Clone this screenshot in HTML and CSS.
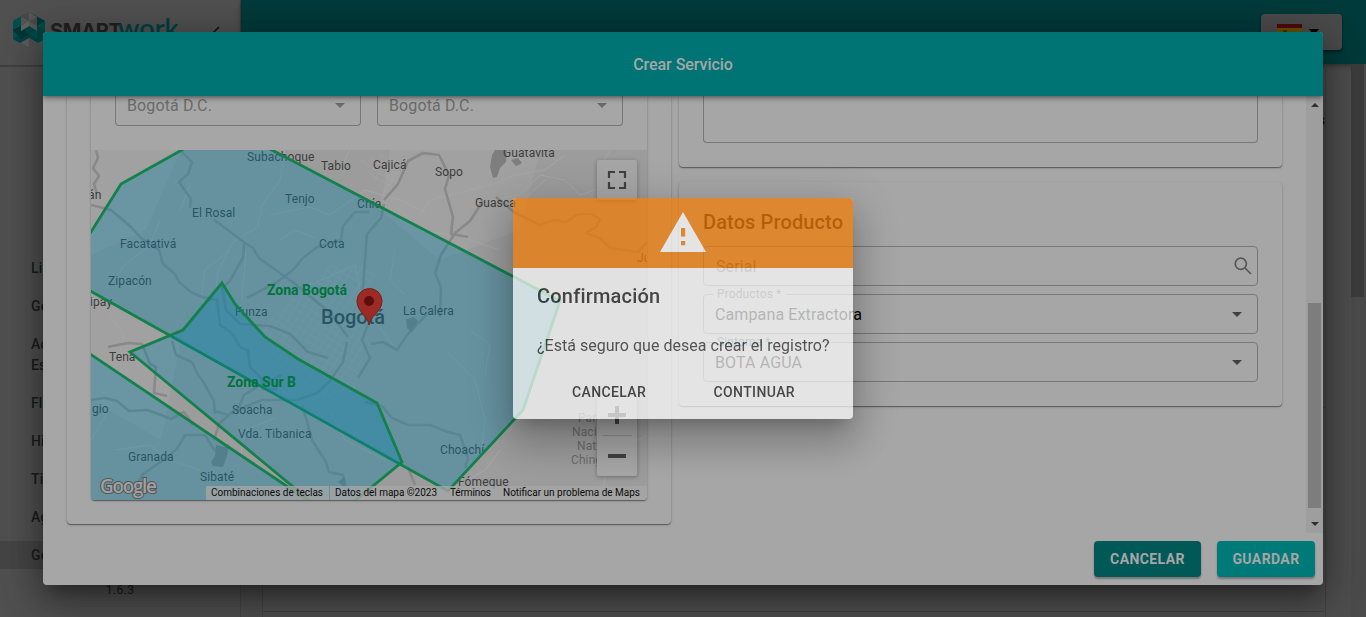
FILE: index.html
```html
<!DOCTYPE html>
<html lang="es">
<head>
<meta charset="utf-8">
<title>Crear Servicio</title>
<link rel="stylesheet" href="styles.css">
</head>
<body>
<div class="app">
  <aside class="sidebar">
    <div class="brand">
      <svg class="brand-mark" viewBox="0 0 34 36">
        <path fill="#004241" d="M1 9 17 0l16 9v18l-16 9-16-9z"/>
        <path fill="#004f4e" d="m1 9 8-4v9l-8 4zM1 18l8 5-8 4z"/>
        <path fill="#003736" d="m9 14 8 9-8 4-8-9zM25 5l8 4-8 5z"/>
        <path fill="#004b4a" d="m33 9-8 5 8 4zM17 22l8-4v9z"/>
        <path fill="#565656" d="M9 5 17 0l8 5v14l-8-5-8 5z"/>
        <path fill="#484848" d="M9 5 17 0v9zM17 9l8-4v9z"/>
        <path fill="#616161" d="m9 14 8-5v5l-8 5z"/>
        <path fill="#5b5b5b" d="m8 31 9-5 9 5-9 5z"/>
        <path fill="#4e4e4e" d="m17 26 9 5-9 5z"/>
      </svg>
      <span class="brand-smart">SMART</span><span class="brand-work">work</span>
      <svg class="brand-arrow" viewBox="0 0 8 14"><path d="M7 1 1 7l6 6" fill="none" stroke="#161616" stroke-width="1.7"/></svg>
    </div>
    <nav class="menu">
      <div class="menu-item">Li</div>
      <div class="menu-item">Ge</div>
      <div class="menu-item tall">Ac<br>Es</div>
      <div class="menu-item">Fl</div>
      <div class="menu-item">Hi</div>
      <div class="menu-item">Ti</div>
      <div class="menu-item">Ag</div>
      <div class="menu-item active">Ge</div>
    </nav>
    <div class="version">1.6.3</div>
  </aside>
  <div class="main">
    <header class="topbar">
      <div class="lang">
        <svg width="25" height="17" viewBox="0 0 25 17"><path fill="#500a0d" d="M0 0h25v17H0z"/><path fill="#665000" d="M0 4h25v9H0z"/><path fill="#4a2c08" d="M6 6h4v5H6z"/></svg>
        <svg width="10" height="6" viewBox="0 0 10 6"><path d="M0 0h10L5 6z"/></svg>
      </div>
    </header>
    <div class="workspace">
      <div class="table">
        <div class="table-head">s</div>
        <div class="table-row"></div>
        <div class="table-row"></div>
        <div class="table-row last"></div>
      </div>
      <div class="page-scroll"><div class="page-thumb"></div></div>
    </div>
  </div>
</div>

<section class="modal">
  <h1 class="modal-head">Crear Servicio</h1>
  <div class="modal-body">
    <div class="content">
      <div class="card place">
        <div class="map-card">
          <div class="selects">
            <div class="field cut muted"><span>Bogotá D.C.</span><i class="caret"></i></div>
            <div class="field cut muted"><span>Bogotá D.C.</span><i class="caret"></i></div>
          </div>
          <svg class="map" viewBox="91 150 556 350">
            <defs>
              <pattern id="streets" width="7" height="7" patternUnits="userSpaceOnUse" patternTransform="rotate(32)">
                <path d="M0 0H7M0 0V7" stroke="#adadad" stroke-width=".8" fill="none"/>
              </pattern>
            </defs>
            <path fill="#9c9c9c" d="M91 150h556v350H91z"/>
            <path fill="#a1a1a1" d="M91 150h90l-35 80-55 25zM390 150h150l-20 80-80 30-60-50zM91 290l90 50-20 100-70-40z"/>
            <path fill="url(#streets)" d="m290 300 40-35 45 5-5 60-15 60-25 15-50-40-25-30zM360 160l22-8 18 25-16 18z" opacity=".6"/>
            <g class="road-minor">
              <path d="M285 150l-5 30-18 25-4 22-25 15-15 30-5 38M160 220l-10 25-25 20-20 25M246 250l-4 50M270 215l40-8 20 8 35-25 35 10 25 12M420 215l10-15 60-15 25-10 30-5 20-15M490 200l30-5 20-20 25 5 15 15 30-10M300 290l55-25 8 40 30 40M410 230l45 5 45 15M445 350l30 30 10 40-5 40M470 330l20 15-5 30M600 500l8-35 20-20 20-10M91 440l15-25-4-20 20-25M200 470l-30-10-20-15-35 5M240 460l5-30 30-12M330 410l15 30 40 20M500 450l-15 20-35 20M545 180l-20 18-35 5M91 380l25-10 8-35-15-20"/>
              <path d="M395 250l-5 30 15 15M280 240l15-10 20 8M180 210l10-25M230 250l-25 20-4 30 20 20M350 150l-10 20M610 150l-12 20"/>
            </g>
            <g class="road-main">
              <path d="M96 150l2 8-5 10 6 8-5 8 3 10M91 205l20 5 20 17 10 11 18 12 4 14 12 10 4 8 12 10 11 5 15 3 3 25 12 8 8 14 8 3 2 17 12 12 1 10 14 0"/>
              <path d="M180 150l12 12-4 12-9 8 12 17-1 9M213 219l32 24 8 5 6 10 35 25 12 10 18 15 10 10 14 19M244 243l-1 15-14 24-7 6 4 22 14 14 30 2 20 8 18 18 20 6"/>
              <path d="M369 212l-14 0-12 14-2 14-24 7-14 11-10 12-16 12-30 16M347 342l-4 20-14 20-12 11-20 7-35 0-30 12-13 12-5 16M384 204l-3 14-14 16-2 26-3 42M370 290l2 24-10 26 8 18-12 20M384 200l14-16 10-23 15-8 16 2 10 20-4 14 8 28-2 17 17 3M455 233l-14 22-6 18 6 14-1 30M455 233l15-12 13-20M496 197l18 15 16 8 10 5 14-5 12 2 12-8 14 0 8 5-4 8-10 6 14 5 10 10 14 2 14 2 14-15"/>
              <path d="M108 347l20-4 14 1 8 20 6 3-2 26 13 3M172 341l4 14 16 7 6 13 6 8 10 18 1 13M91 400l14-2 12 3 12 10 18-1 14 5 10 4 13-7 9 13M215 411l14 4 10-8 5-12 16-10 22-10M133 492l10-18 19-13 15-12 8-14 20 0 10 16M302 406l4 12 6 22 14 22 3 10 14 3 4 16M371 344l12-2 14 8 10-15 20-21M365 402l17 4 10 12 16 7 22 0 18 7 12 3 8 23-3 10M415 485l-4-10-3-8"/>
            </g>
            <path fill="#7e7e7e" d="m495 150 12 0-1 12-6 6-3 9-4 1-3-11 2-12zM511 160l7-2 4 5-6 3zM216 445l8 2 5-3-2 12-4 11-10-1-2-4 4-6zM406 319l8-2 4 4-6 11-5-4zM338 482l6-5 2 5-2 5z"/>
            <g class="labels">
              <text x="247" y="161.300">Subachoque</text><text x="321" y="170">Tabio</text>
              <text x="373" y="169">Cajicá</text><text x="435" y="176">Sopo</text>
              <text x="503" y="157.300">Guatavita</text><text x="475" y="207">Guasca</text>
              <text x="285" y="203">Tenjo</text><text x="357" y="208">Chía</text>
              <text x="192" y="217">El Rosal</text><text x="120" y="248">Facatativá</text>
              <text x="319" y="248">Cota</text><text x="108" y="285">Zipacón</text>
              <text x="88" y="199">án</text><text x="90" y="306">ipay</text>
              <text x="109" y="361">Tena</text><text x="235" y="316">Funza</text>
              <text x="403" y="315">La Calera</text><text x="637" y="262">Ju</text>
              <text x="92" y="413">gio</text><text x="232" y="414">Soacha</text>
              <text x="238" y="438">Vda. Tibanica</text><text x="128" y="461">Granada</text>
              <text x="200" y="481">Sibaté</text><text x="440" y="454">Choachí</text>
              <text x="458" y="486">Fómeque</text>
              <text class="city" x="321" y="324">Bogotá</text>
              <g class="park"><text x="578" y="422">Parque</text><text x="572" y="436">Nacional</text><text x="577" y="450">Natural</text><text x="571" y="464">Chingaza</text></g>
            </g>
            <g class="zones">
              <path d="M60 274 91 232l30-48 84-47 42 0L560 301 523 410 448 491z"/>
              <path d="m222 283 13 21 30 33 33 22 79 44 25 59-57 47h-25L130 352l53-22z"/>
              <path d="m50 327 235 158 40 28H50z"/>
            </g>
            <text class="zone-name" x="267" y="295" textLength="80">Zona Bogotá</text>
            <text class="zone-name" x="227" y="387" textLength="69">Zona Sur B</text>
            <path d="M369 325c-1-9-12-13-12-24a12.500 12.500 0 0 1 25 0c0 11-12 15-13 24z" fill="#9d2b25" stroke="#7c1e1a"/>
            <circle cx="369" cy="301" r="5" fill="#5e0d0b"/>
            <text class="google" x="100" y="493" textLength="57">Google</text>
            <path fill="#a6a6a6" fill-opacity=".78" d="M206 486h123v14H206zM330 486h317v14H330z"/>
            <g class="credits">
              <text x="211" y="496" textLength="112">Combinaciones de teclas</text>
              <text x="335" y="496" textLength="102">Datos del mapa ©2023</text>
              <text x="450" y="496" textLength="41">Términos</text>
              <text x="503" y="496" textLength="137">Notificar un problema de Maps</text>
            </g>
            <g class="controls">
              <rect x="597" y="160" width="40" height="40" rx="2"/>
              <rect x="597" y="396" width="40" height="80" rx="2"/>
            </g>
            <path d="M602 435.500h30" stroke="#8f8f8f"/>
            <path d="M609 178v-6h6M619 172h6v6M625 182v6h-6M615 188h-6v-6" fill="none" stroke="#404040" stroke-width="2.200"/>
            <path d="M608 415h18M617 406v18M608 456h18" stroke="#404040" stroke-width="4"/>
          </svg>
        </div>
      </div>
      <div class="column">
        <div class="card notes"><div class="field area"></div></div>
        <div class="card product">
          <h2>Datos Producto</h2>
          <div class="field hint"><span>Serial</span>
            <svg class="search" viewBox="0 0 18 18"><circle cx="6.800" cy="6.800" r="5.600"/><path d="m11 11 6 6"/></svg>
          </div>
          <div class="field"><label>Productos *</label><span>Campana Extractora</span><i class="caret dark"></i></div>
          <div class="field"><label class="focus">Sintoma *</label><span>BOTA AGUA</span><i class="caret dark"></i></div>
        </div>
      </div>
    </div>
    <div class="scroll">
      <i class="arrow up"></i>
      <div class="thumb"></div>
      <i class="arrow down"></i>
    </div>
  </div>
  <footer class="modal-foot">
    <button class="btn cancel">CANCELAR</button>
    <button class="btn save">GUARDAR</button>
  </footer>
</section>

<section class="confirm">
  <div class="confirm-head">
    <svg width="46" height="40" viewBox="0 0 46 40"><path fill="#fff" fill-rule="evenodd" d="M0 40 23 0l23 40zM21 16v8.500h4.200V16zM21 29v4.200h4.200V29z"/></svg>
  </div>
  <h2>Confirmación</h2>
  <p>¿Está seguro que desea crear el registro?</p>
  <div class="confirm-actions"><button>CANCELAR</button><button>CONTINUAR</button></div>
</section>
</body>
</html>
```

FILE: styles.css
```css
* { box-sizing: border-box; }
body { margin: 0; height: 617px; overflow: hidden; background: #4e4e4e; font-family: Roboto, sans-serif; color: #1c1c1c; }
h1, h2, p { margin: 0; }
button { font: inherit; border: 0; background: none; padding: 0; }

.app { display: flex; height: 617px; }
.sidebar { width: 241px; background: #505050; border-right: 1px solid #444; }
.brand { display: flex; align-items: center; height: 67px; padding: 0 20px 5px 12px; border-bottom: 2px solid #404040; }
.brand-mark { width: 34px; height: 36px; margin-right: 4px; }
.brand-smart { font: 700 20px/26px Inter, sans-serif; color: #202020; letter-spacing: -.3px; width: 68px; padding-top: 2px; }
.brand-work { font: 600 27px/26px Lato, sans-serif; color: #003f3f; flex: 1; padding-bottom: 4px; }
.brand-arrow { width: 8px; height: 14px; margin-top: 6px; }
.menu { padding-top: 187px; font-size: 14px; font-weight: 500; letter-spacing: .1px; }
.menu-item { height: 28px; margin-bottom: 10px; padding-left: 31px; line-height: 28px; }
.menu-item.tall { height: 49px; line-height: 21px; padding-top: 4px; }
.menu-item.active { background: #454545; }
.version { text-align: center; font-size: 12px; letter-spacing: .4px; line-height: 14px; padding-top: 4px; }
.main { flex: 1; display: flex; flex-direction: column; }
.topbar { height: 64px; background: #003a3a; display: flex; justify-content: flex-end; align-items: center; padding-right: 24px; box-shadow: 0 2px 5px rgba(0,0,0,.35); }
.lang { display: flex; align-items: center; gap: 7px; width: 81px; height: 36px; padding-left: 16px; background: #4b4b4b; border-radius: 4px; box-shadow: 0 2px 3px rgba(0,0,0,.4); }
.workspace { flex: 1; display: flex; padding-left: 21px; }
.table { width: 1064px; border: solid #434343; border-width: 0 1px; }
.table-head { height: 242px; padding-top: 47px; text-align: right; font-size: 15px; font-weight: 700; color: #001018; }
.table-row { height: 102px; border-bottom: 1px solid #414141; }
.page-scroll { margin-left: auto; width: 15px; background: #4b4b4b; }
.page-thumb { width: 13px; height: 233px; background: #3c3c3c; }

.modal { position: absolute; left: 43px; top: 32px; width: 1280px; height: 553px; display: flex; flex-direction: column; background: #a6a6a6; border-radius: 4px; overflow: hidden; box-shadow: 0 11px 15px -7px rgba(0,0,0,.3), 0 18px 38px 3px rgba(0,0,0,.25), 0 5px 40px 5px rgba(0,0,0,.2); }
.modal-head { height: 64px; padding-top: 1px; line-height: 64px; text-align: center; background: #007474; color: #a6a6a6; font-size: 16px; font-weight: 500; letter-spacing: -.05px; z-index: 1; box-shadow: 0 2px 4px -1px rgba(0,0,0,.4), 0 4px 5px rgba(0,0,0,.14); }
.modal-body { height: 437px; display: flex; }
.content { flex: 1; display: flex; gap: 8px; align-items: flex-start; padding: 0 24px; }
.card, .map-card { border-radius: 0 0 4px 4px; box-shadow: 0 1px 1px rgba(0,0,0,.4), 0 1px 3px rgba(0,0,0,.15); }
.place { width: 604px; height: 428px; padding: 0 24px; }
.map-card { width: 556px; height: 404px; overflow: hidden; }
.selects { display: flex; gap: 16px; padding: 0 24px 24px; }
.field { position: relative; flex: 1; height: 40px; display: flex; align-items: center; justify-content: space-between; padding: 0 15px 0 11px; border: 1px solid #777; border-radius: 4px; font-size: 16px; letter-spacing: .12px; }
.cut { height: 30px; border-top: 0; border-radius: 0 0 4px 4px; padding-bottom: 10px; }
.muted { color: #6b6b6b; }
.caret { border: 5px solid transparent; border-top-color: #6b6b6b; border-bottom: 0; }
.caret.dark { border-top-color: #404040; }
.map { display: block; width: 556px; height: 350px; }
.road-minor path { fill: none; stroke: #a8a8a8; stroke-width: 1; opacity: .75; }
.road-main path { fill: none; stroke: #898989; stroke-width: 2.6; stroke-linejoin: round; }
.labels { font-size: 12px; fill: #3d3d3d; letter-spacing: .1px; }
.labels .city { font-size: 20px; font-weight: 500; letter-spacing: 0; }
.labels .park { fill: #6b6b6b; }
.zones path { fill: #0081ab; fill-opacity: .34; stroke: #14804c; stroke-width: 2.8; }
.zone-name { font-size: 14px; font-weight: 700; fill: #00743b; }
.google { font: 600 19px "Open Sans", sans-serif; fill: #a0a0a0; stroke: #555; stroke-width: 2px; paint-order: stroke; }
.credits { font-size: 10px; fill: #0b0b0b; }
.controls rect { fill: #a6a6a6; filter: drop-shadow(0 1px 2px rgba(0,0,0,.3)); }

.column { width: 603px; }
.notes { height: 71px; padding: 0 24px 24px; }
.area { height: 47px; border-top: 0; border-radius: 0 0 4px 4px; }
.product { margin-top: 15px; height: 224px; padding: 24px; border-radius: 4px; display: flex; flex-direction: column; }
.product h2 { flex: none; height: 40px; line-height: 32px; font-size: 20px; font-weight: 500; letter-spacing: .12px; }
.product .field { flex: none; margin-bottom: 8px; color: #000; }
.product .hint { padding-left: 12px; padding-right: 5px; color: #555; }
.search { width: 18px; height: 18px; fill: none; stroke: #575757; stroke-width: 1.7; }
.field label { position: absolute; left: 9px; top: -8px; padding: 0 5px 0 4px; background: #a6a6a6; font-size: 12px; line-height: 14px; color: #555; }
.field label.focus { color: #285a63; }
.scroll { width: 17px; background: #9e9e9e; padding: 7px 2px 6px; display: flex; flex-direction: column; align-items: center; }
.arrow { border: 4px solid transparent; }
.arrow.up { border-bottom: 4px solid #303030; border-top: 0; }
.arrow.down { border-top: 4px solid #303030; border-bottom: 0; margin-top: 14px; }
.thumb { width: 13px; height: 205px; margin-top: 196px; background: #7d7d7d; }
.modal-foot { height: 52px; display: flex; justify-content: flex-end; gap: 16px; padding: 8px 8px 0; }
.btn { height: 36px; border-radius: 4px; color: #a6a6a6; font-size: 14px; font-weight: 700; letter-spacing: .4px; box-shadow: 0 2px 2px rgba(0,0,0,.3); }
.cancel { width: 107px; background: #005857; }
.save { width: 98px; background: #007979; }

.confirm { position: absolute; left: 513px; top: 198px; width: 340px; height: 221px; opacity: .7; background: #fff; border-radius: 4px; overflow: hidden; box-shadow: 0 11px 15px -7px rgba(0,0,0,.3), 0 24px 38px 3px rgba(0,0,0,.24), 0 9px 46px 8px rgba(0,0,0,.2); color: #202020; }
.confirm-head { height: 70px; padding-top: 14px; background: #f57c00; text-align: center; }
.confirm h2 { padding: 12px 24px 0; font-size: 20px; line-height: 32px; font-weight: 500; letter-spacing: .2px; }
.confirm p { padding: 22px 24px 0; font-size: 16px; line-height: 24px; letter-spacing: .02px; white-space: nowrap; color: #333; }
.confirm-actions { display: flex; justify-content: space-between; padding: 26px 58px 0 59px; font-size: 14px; line-height: 16px; font-weight: 500; }
.confirm-actions button { color: #202020; letter-spacing: .38px; }
```
